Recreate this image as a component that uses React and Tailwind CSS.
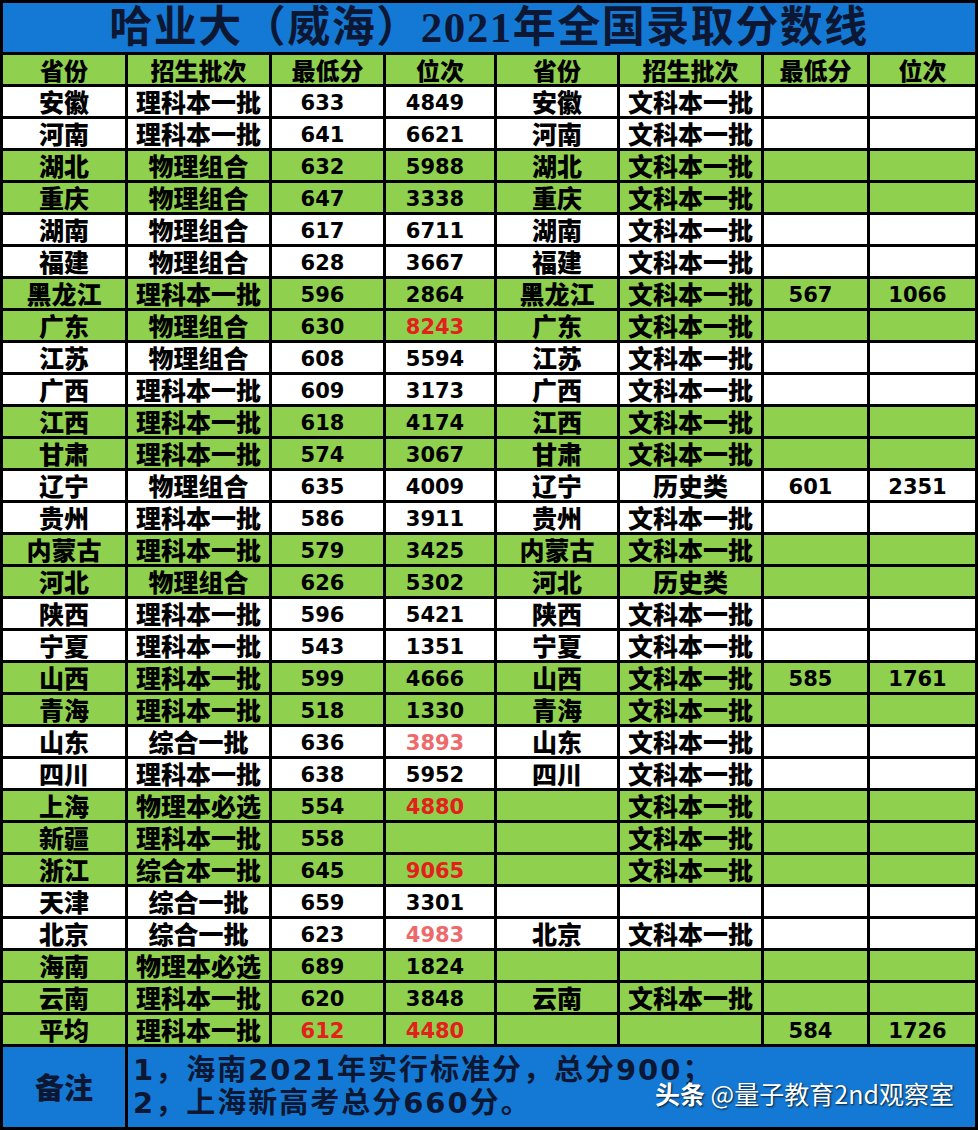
import React from 'react';

const COLS = 'grid grid-cols-[122px_141px_111px_108px_120px_141px_103px_105px] gap-x-[3px]';
const CJK = "font-['Noto_Sans_CJK_SC',sans-serif]";
const NUM = "font-['DejaVu_Sans','Noto_Sans_CJK_SC',sans-serif]";

// last two fields: colour of the score / rank (r = red, p = pink)
const ROWS = [
  ['安徽', '理科本一批', '633', '4849', '安徽', '文科本一批', '', '', 0],
  ['河南', '理科本一批', '641', '6621', '河南', '文科本一批', '', '', 0],
  ['湖北', '物理组合', '632', '5988', '湖北', '文科本一批', '', '', 1],
  ['重庆', '物理组合', '647', '3338', '重庆', '文科本一批', '', '', 1],
  ['湖南', '物理组合', '617', '6711', '湖南', '文科本一批', '', '', 0],
  ['福建', '物理组合', '628', '3667', '福建', '文科本一批', '', '', 0],
  ['黑龙江', '理科本一批', '596', '2864', '黑龙江', '文科本一批', '567', '1066', 1],
  ['广东', '物理组合', '630', '8243', '广东', '文科本一批', '', '', 1, '', 'r'],
  ['江苏', '物理组合', '608', '5594', '江苏', '文科本一批', '', '', 0],
  ['广西', '理科本一批', '609', '3173', '广西', '文科本一批', '', '', 0],
  ['江西', '理科本一批', '618', '4174', '江西', '文科本一批', '', '', 1],
  ['甘肃', '理科本一批', '574', '3067', '甘肃', '文科本一批', '', '', 1],
  ['辽宁', '物理组合', '635', '4009', '辽宁', '历史类', '601', '2351', 0],
  ['贵州', '理科本一批', '586', '3911', '贵州', '文科本一批', '', '', 0],
  ['内蒙古', '理科本一批', '579', '3425', '内蒙古', '文科本一批', '', '', 1],
  ['河北', '物理组合', '626', '5302', '河北', '历史类', '', '', 1],
  ['陕西', '理科本一批', '596', '5421', '陕西', '文科本一批', '', '', 0],
  ['宁夏', '理科本一批', '543', '1351', '宁夏', '文科本一批', '', '', 0],
  ['山西', '理科本一批', '599', '4666', '山西', '文科本一批', '585', '1761', 1],
  ['青海', '理科本一批', '518', '1330', '青海', '文科本一批', '', '', 1],
  ['山东', '综合一批', '636', '3893', '山东', '文科本一批', '', '', 0, '', 'p'],
  ['四川', '理科本一批', '638', '5952', '四川', '文科本一批', '', '', 0],
  ['上海', '物理本必选', '554', '4880', '', '文科本一批', '', '', 1, '', 'r'],
  ['新疆', '理科本一批', '558', '', '', '文科本一批', '', '', 1],
  ['浙江', '综合本一批', '645', '9065', '', '文科本一批', '', '', 1, '', 'r'],
  ['天津', '综合一批', '659', '3301', '', '', '', '', 0],
  ['北京', '综合一批', '623', '4983', '北京', '文科本一批', '', '', 0, '', 'p'],
  ['海南', '物理本必选', '689', '1824', '', '', '', '', 1],
  ['云南', '理科本一批', '620', '3848', '云南', '文科本一批', '', '', 1],
  ['平均', '理科本一批', '612', '4480', '', '', '584', '1726', 1, 'r', 'r'],
];

const tone = t =>
  t === 'r' ? 'text-[#e3201c]' : t === 'p' ? 'text-[#ee6a6a]' : 'text-black';

function Text({ bg, children }) {
  return (
    <div className={`${bg} flex items-center justify-center ${CJK} text-[25px] font-black leading-none text-black`}>
      {children}
    </div>
  );
}

function Num({ bg, color, children }) {
  return (
    <div className={`${bg} flex items-center justify-center pr-[10px] pt-[3px] ${NUM} text-[21px] font-bold leading-none ${tone(color)}`}>
      {children}
    </div>
  );
}

export default function App() {
  return (
    <div className="w-[978px] h-[1130px] bg-black p-[3px] flex flex-col gap-y-[3px] relative">
      {/* title */}
      <div className="h-[49px] bg-[#1479d4] flex items-center justify-center">
        <span className="font-['Liberation_Serif','Noto_Sans_CJK_SC',serif] text-[43px] font-bold leading-none text-[#0c1733] tracking-[1.5px]">
          哈业大（威海）2021年全国录取分数线
        </span>
      </div>

      {/* header */}
      <div className={`${COLS} h-[29px]`}>
        {['省份', '招生批次', '最低分', '位次', '省份', '招生批次', '最低分', '位次'].map((h, i) => (
          <div key={i} className={`bg-[#8fd14e] flex items-center justify-center ${CJK} text-[24px] font-black leading-none text-black`}>
            {h}
          </div>
        ))}
      </div>

      {ROWS.map((r, i) => {
        const bg = r[8] ? 'bg-[#8fd14e]' : 'bg-white';
        return (
          <div key={i} className={`${COLS} h-[29px]`}>
            <Text bg={bg}>{r[0]}</Text>
            <Text bg={bg}>{r[1]}</Text>
            <Num bg={bg} color={r[9]}>{r[2]}</Num>
            <Num bg={bg} color={r[10]}>{r[3]}</Num>
            <Text bg={bg}>{r[4]}</Text>
            <Text bg={bg}>{r[5]}</Text>
            <Num bg={bg}>{r[6]}</Num>
            <Num bg={bg}>{r[7]}</Num>
          </div>
        );
      })}

      {/* notes */}
      <div className="grid grid-cols-[122px_1fr] gap-x-[3px] h-[80px]">
        <div className={`bg-[#1479d4] flex items-center justify-center ${CJK} text-[29px] font-black text-[#0c1733]`}>
          备注
        </div>
        <div className={`bg-[#1479d4] flex flex-col justify-center pl-[5px] ${NUM} text-[29px] font-bold leading-[33px] tracking-[2px] text-[#0c1733]`}>
          <div>1，海南2021年实行标准分，总分900；</div>
          <div>2，上海新高考总分660分。</div>
        </div>
      </div>

      {/* watermark */}
      <div className={`absolute left-[655px] top-[1081px] ${CJK} text-[25px] leading-none text-white [text-shadow:1px_1px_2px_rgba(0,0,0,0.8)] whitespace-nowrap`}>
        <span className="font-bold">头条</span> @量子教育2nd观察室
      </div>
    </div>
  );
}
